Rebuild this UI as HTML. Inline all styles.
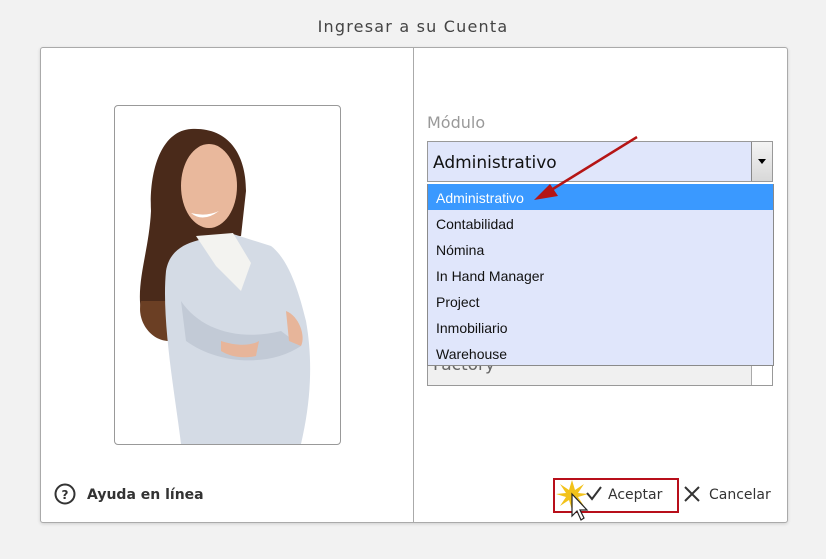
<!DOCTYPE html>
<html><head><meta charset="utf-8"><style>
body{margin:0;width:826px;height:559px;background:#f2f2f2;font-family:"Liberation Sans","DejaVu Sans",sans-serif;position:relative;overflow:hidden}
.abs{position:absolute}
.title{left:0;width:826px;top:17px;text-align:center;font-family:"DejaVu Sans",sans-serif;font-size:16px;color:#444;letter-spacing:1.2px}
.panel{left:40px;top:47px;width:746px;height:474px;background:#fff;border:1px solid #aaa;border-radius:3px;box-shadow:0 1px 3px rgba(0,0,0,.15)}
.div{left:413px;top:48px;width:1px;height:474px;background:#aaa}
.photo{left:114px;top:105px;width:225px;height:338px;border:1px solid #999;border-radius:4px;background:#fff;overflow:hidden}
.lbl{left:427px;top:113px;font-family:"DejaVu Sans",sans-serif;font-size:16px;color:#999}
.sel{left:427px;top:141px;width:346px;height:41px;border:1px solid #999;background:#e0e6fb;box-sizing:border-box}
.sel span{position:absolute;left:5px;top:11px;font-family:"DejaVu Sans",sans-serif;font-size:17px;color:#111}
.btn{position:absolute;right:0;top:0;width:20px;height:39px;border-left:1px solid #888;background:linear-gradient(#f4f4f4,#d8d8d8)}
.btn:after{content:"";position:absolute;left:6px;top:17px;border-left:4px solid transparent;border-right:4px solid transparent;border-top:5px solid #000}
.sel2{left:427px;top:355px;width:346px;height:31px;border:1px solid #999;background:#f0f0f0;box-sizing:border-box}
.sel2 span{position:absolute;left:5px;top:-1px;font-family:"DejaVu Sans",sans-serif;font-size:17px;color:#666}
.sel2 i{position:absolute;right:0;top:0;width:20px;height:29px;border-left:1px solid #aaa;background:#fff}
.list{left:427px;top:184px;width:347px;height:182px;background:#e0e6fb;border:1px solid #8a8a8a;border-top:none;box-sizing:border-box}
.list div{height:26px;line-height:28px;padding-left:8px;font-size:14px;color:#111}
.list .hl{background:#3a99ff;color:#fff}
.help{left:55px;top:487px;font-family:"DejaVu Sans",sans-serif;font-weight:bold;font-size:14px;color:#333}
.acc{left:553px;top:478px;width:126px;height:35px;border:2px solid #b80f1a;box-sizing:border-box}
.t{font-family:"DejaVu Sans",sans-serif;font-size:14px;color:#333}
</style></head><body>
<div class="abs title">Ingresar a su Cuenta</div>
<div class="abs panel"></div>
<div class="abs div"></div>
<div class="abs photo">
<svg width="225" height="338" viewBox="114 105 225 338">
<path d="M190 128 C160 130 148 170 150 210 C148 250 135 280 140 310 C143 330 155 340 165 338 L175 260 L200 240 L240 235 L245 190 C245 150 225 126 190 128Z" fill="#4a2a1a"/>
<path d="M140 300 C135 320 150 340 168 340 L175 300Z" fill="#6b3f24"/>
<ellipse cx="208" cy="185" rx="28" ry="42" fill="#e9b89c"/>
<path d="M190 212 Q202 222 218 210 Q205 216 190 212Z" fill="#fff"/>
<path d="M165 270 C170 240 200 238 232 233 L270 245 C290 260 300 300 305 320 C312 360 310 400 300 443 L180 443 C175 400 160 320 165 270Z" fill="#d4dbe5"/>
<path d="M195 235 L232 232 L250 262 L240 290 L215 265Z" fill="#f3f3f0"/>
<path d="M180 300 C200 330 240 340 280 330 L300 345 C270 365 220 365 185 340Z" fill="#c2cad6"/>
<path d="M220 340 C235 345 250 345 258 340 L255 355 C240 358 228 355 220 350Z" fill="#e7b59a"/>
<path d="M285 310 C298 315 305 335 300 345 L288 340Z" fill="#e7b59a"/>
</svg></div>
<div class="abs lbl">Módulo</div>
<div class="abs sel"><span>Administrativo</span><div class="btn"></div></div>
<div class="abs sel2"><span>Factory</span><i></i></div>
<div class="abs list">
<div class="hl">Administrativo</div><div>Contabilidad</div><div>Nómina</div><div>In Hand Manager</div><div>Project</div><div>Inmobiliario</div><div>Warehouse</div>
</div>
<svg class="abs" style="left:520px;top:130px" width="130" height="80"><line x1="117" y1="7" x2="28" y2="62" stroke="#b51515" stroke-width="2.5"/><polygon points="14,70 30,54 38,66" fill="#b51515"/></svg>
<svg class="abs" style="left:54px;top:483px" width="24" height="24"><circle cx="11" cy="11" r="9.5" fill="none" stroke="#333" stroke-width="2"/><text x="11" y="16" text-anchor="middle" font-family="DejaVu Sans" font-weight="bold" font-size="12" fill="#333">?</text></svg>
<div class="abs help" style="left:87px">Ayuda en línea</div>
<div class="abs acc"></div>
<svg class="abs" style="left:556px;top:478px" width="50" height="46">
<polygon points="16,2 19,12 28,6 22,15 32,16 22,19 28,28 19,22 16,32 13,22 4,28 10,19 0,16 10,15 4,6 13,12" fill="#f2c21a"/>
<path d="M31 15 L36 21 L45 9" fill="none" stroke="#333" stroke-width="2"/>
<path d="M16 16 L16 38 L21 33 L25 42 L28 40 L24 32 L31 32Z" fill="#fff" stroke="#222" stroke-width="1.2"/>
</svg>
<div class="abs t" style="left:608px;top:487px">Aceptar</div>
<svg class="abs" style="left:683px;top:485px" width="18" height="18"><path d="M2 2 L16 16 M16 2 L2 16" stroke="#333" stroke-width="2"/></svg>
<div class="abs t" style="left:709px;top:487px">Cancelar</div>
</body></html>
